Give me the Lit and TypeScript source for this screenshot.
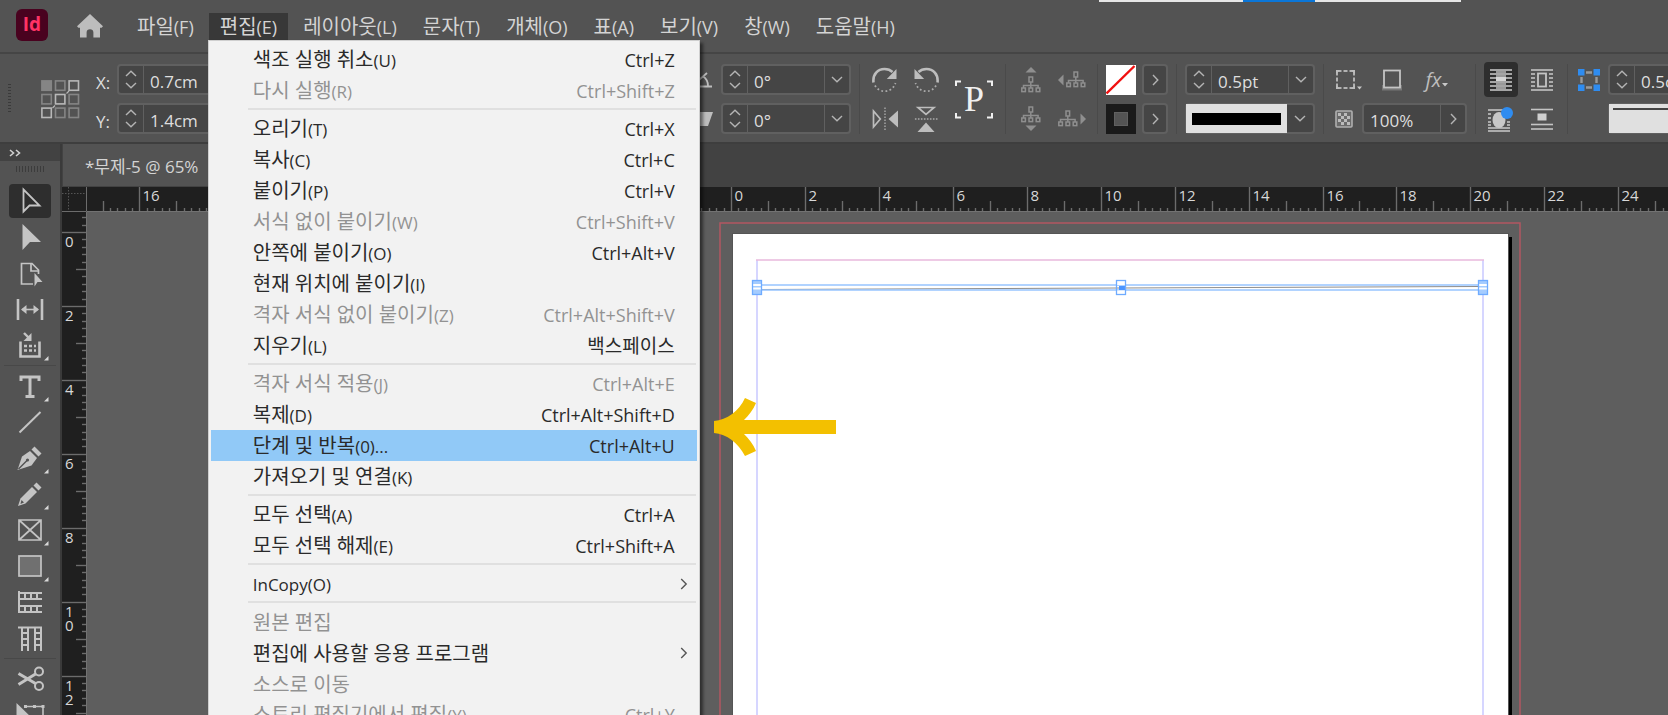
import { LitElement, html, svg, css, nothing } from "lit";
import { customElement, property } from "lit/decorators.js";
import { classMap } from "lit/directives/class-map.js";

const FONT = css`"Open Sans", "Noto Sans CJK KR", sans-serif`;

interface Command {
  label: string;
  key?: string;
  shortcut?: string;
  disabled?: boolean;
  active?: boolean;
  submenu?: boolean;
}

const MENUS: [string, string][] = [
  ["파일", "(F)"],
  ["편집", "(E)"],
  ["레이아웃", "(L)"],
  ["문자", "(T)"],
  ["개체", "(O)"],
  ["표", "(A)"],
  ["보기", "(V)"],
  ["창", "(W)"],
  ["도움말", "(H)"],
];

const EDIT_MENU: Command[][] = [
  [
    { label: "색조 실행 취소", key: "(U)", shortcut: "Ctrl+Z" },
    { label: "다시 실행", key: "(R)", shortcut: "Ctrl+Shift+Z", disabled: true },
  ],
  [
    { label: "오리기", key: "(T)", shortcut: "Ctrl+X" },
    { label: "복사", key: "(C)", shortcut: "Ctrl+C" },
    { label: "붙이기", key: "(P)", shortcut: "Ctrl+V" },
    { label: "서식 없이 붙이기", key: "(W)", shortcut: "Ctrl+Shift+V", disabled: true },
    { label: "안쪽에 붙이기", key: "(O)", shortcut: "Ctrl+Alt+V" },
    { label: "현재 위치에 붙이기", key: "(I)" },
    { label: "격자 서식 없이 붙이기", key: "(Z)", shortcut: "Ctrl+Alt+Shift+V", disabled: true },
    { label: "지우기", key: "(L)", shortcut: "백스페이스" },
  ],
  [
    { label: "격자 서식 적용", key: "(J)", shortcut: "Ctrl+Alt+E", disabled: true },
    { label: "복제", key: "(D)", shortcut: "Ctrl+Alt+Shift+D" },
    { label: "단계 및 반복", key: "(0)...", shortcut: "Ctrl+Alt+U", active: true },
    { label: "가져오기 및 연결", key: "(K)" },
  ],
  [
    { label: "모두 선택", key: "(A)", shortcut: "Ctrl+A" },
    { label: "모두 선택 해제", key: "(E)", shortcut: "Ctrl+Shift+A" },
  ],
  [{ label: "", key: "InCopy(O)", submenu: true }],
  [
    { label: "원본 편집", disabled: true },
    { label: "편집에 사용할 응용 프로그램", submenu: true },
    { label: "소스로 이동", disabled: true },
    { label: "스토리 편집기에서 편집", key: "(Y)", shortcut: "Ctrl+Y", disabled: true },
  ],
];

/* ---------- icons ---------- */

const icon = (w: number, h: number, body: unknown) =>
  html`<svg width=${w} height=${h} viewBox="0 0 ${w} ${h}" aria-hidden="true">${body}</svg>`;

const chevron = {
  up: icon(12, 7, svg`<path d="M1 6L6 1.2L11 6" fill="none" stroke="#b4b4b4" stroke-width="1.4"/>`),
  down: icon(12, 7, svg`<path d="M1 1L6 5.8L11 1" fill="none" stroke="#b4b4b4" stroke-width="1.4"/>`),
  right: icon(7, 12, svg`<path d="M1 1L5.8 6L1 11" fill="none" stroke="#b4b4b4" stroke-width="1.4"/>`),
  submenu: icon(8, 12, svg`<path d="M1.2 1L6.2 6L1.2 11" fill="none" stroke="#555" stroke-width="1.4"/>`),
};

const homeIcon = icon(26, 24, svg`<path fill="#bdbdbd" d="M13 0L26 12.2L24.6 13.8H23V23.5H16.4V18.4C16.4 16.4 15 15.2 13 15.2S9.600 16.400 9.600 18.400V23.500H3V13.800H1.400L0 12.200Z"/>`);

const refPoint = (() => {
  const cells = [];
  for (let r = 0; r < 3; r++)
    for (let c = 0; c < 3; c++) {
      const diag = r + c === 2;
      const on = r === 0 && c === 0;
      cells.push(svg`<rect x=${c * 13.6 + 0.9} y=${r * 13.6 + 0.9} width="9.4" height="9.4"
        fill=${on ? "#858585" : "none"} stroke=${diag ? "#b8b8b8" : "#858585"} stroke-width="1.6"/>`);
    }
  return icon(39, 39, svg`${cells}<path d="M11.500 28L14 25.500M25.500 13.500L28 11" stroke="#b8b8b8" stroke-width="1.200"/>`);
})();

const angleIcon = icon(24, 18, svg`<g fill="none" stroke="#bdbdbd" stroke-width="1.800"><path d="M2 15.500H23M3 15L18 2"/><path d="M14 5.500C17.500 7.500 19 11 19 15"/></g>`);
const shearIcon = icon(24, 16, svg`<path d="M6 1H24L19 15H1Z" fill="#bdbdbd"/>`);

const rotateBody = svg`<path d="M1.500 15.500C.500 7 6 2 12.500 2C16 2 18.500 3 20.500 5" fill="none" stroke="#bdbdbd" stroke-width="2.600"/><path d="M24.500 2V12H14.800Z" fill="#bdbdbd"/><path d="M3 18.500C7 26.500 20 26.500 23.500 16" fill="none" stroke="#aaa" stroke-width="1.800" stroke-dasharray="1.800 2.400"/>`;
const rotateCw = icon(26, 26, rotateBody);
const rotateCcw = icon(26, 26, svg`<g transform="matrix(-1 0 0 1 26 0)">${rotateBody}</g>`);
const flipBody = svg`<path d="M1.500 5V21L8.300 13Z" fill="none" stroke="#bdbdbd" stroke-width="1.700"/><path d="M13 1.500V25" stroke="#aaa" stroke-width="1.400" stroke-dasharray="1.600 1.400"/><path d="M26 4.500V21.500L16.500 13Z" fill="#bdbdbd"/>`;
const flipH = icon(26, 26, flipBody);
const flipV = icon(26, 26, svg`<g transform="rotate(90 13 13)">${flipBody}</g>`);
const paragraphBox = icon(38, 39, svg`<g fill="none" stroke="#f0f0f0" stroke-width="2"><path d="M1 6V1.500H6M32 1.500H37V6M37 33V37.500H32M6 37.500H1V33"/></g>`);

const treeBody = svg`<g fill="none" stroke="#8f8f8f" stroke-width="1.500"><rect x="8" y="1" width="3.600" height="5"/><path d="M9.800 6V12M2.500 12V9.500H17.100V12"/><rect x=".8" y="12" width="3.600" height="3.600"/><rect x="8" y="12" width="3.600" height="3.600"/><rect x="15.200" y="12" width="3.600" height="3.600"/></g>`;
const tree = {
  parentUp: icon(20, 26, svg`<g transform="translate(0 9)">${treeBody}</g><path d="M10 0L15.500 5.500H4.500Z" fill="#8f8f8f"/>`),
  parentDown: icon(20, 26, svg`${treeBody}<path d="M10 25L15.500 19.500H4.500Z" fill="#8f8f8f"/>`),
  prev: icon(28, 18, svg`<g transform="translate(8 0)">${treeBody}</g><path d="M0 9L5.500 3.500V14.500Z" fill="#8f8f8f"/>`),
  next: icon(28, 18, svg`${treeBody}<path d="M28 9L22.500 3.500V14.500Z" fill="#8f8f8f"/>`),
};

const noneSwatch = icon(30, 30, svg`<rect width="30" height="30" fill="#fff"/><path d="M.500 28.500L28.500 1" stroke="#f01010" stroke-width="2.400"/>`);
const strokeSwatch = icon(30, 30, svg`<rect width="30" height="30" fill="#1a1a1a"/><rect x="8.500" y="8.500" width="13" height="13" fill="#535353" stroke="#606060"/>`);

const frameFit = icon(30, 26, svg`<rect x="5" y="4" width="17" height="17" fill="none" stroke="#bdbdbd" stroke-width="1.800"/><g fill="#bdbdbd"><path d="M4 3H8L4 7ZM23 3H19L23 7ZM4 22H8L4 18ZM23 22H19L23 18Z"/></g><g fill="#535353"><rect x="9.500" y="2" width="2" height="3"/><rect x="15.500" y="2" width="2" height="3"/><rect x="9.500" y="20" width="2" height="3"/><rect x="15.500" y="20" width="2" height="3"/><rect x="3" y="8.500" width="3" height="2"/><rect x="3" y="14.500" width="3" height="2"/><rect x="21" y="8.500" width="3" height="2"/><rect x="21" y="14.500" width="3" height="2"/></g><path d="M25 19.500H30L27.500 22.500Z" fill="#c8c8c8"/>`);
const shadowBox = icon(22, 24, svg`<rect x="1" y="17" width="20" height="5.500" fill="#777"/><rect x="3" y="2.500" width="16" height="17" fill="#535353" stroke="#c4c4c4" stroke-width="1.800"/>`);
const checker = icon(18, 18, svg`<rect x="1" y="1" width="16" height="16" rx="1" fill="#6b6b6b" stroke="#b0b0b0" stroke-width="1.600"/><path fill="#bbb" d="M3 3H6V6H3ZM9 3H12V6H9ZM6 6H9V9H6ZM12 6H15V9H12ZM3 9H6V12H3ZM9 9H12V12H9ZM6 12H9V15H6ZM12 12H15V15H12Z"/>`);
const dropTick = icon(6, 4, svg`<path d="M0 0H6L3 3.500Z" fill="#c8c8c8"/>`);

const lines = (ys: number[], x1 = 0, x2 = 22) => ys.map((y) => svg`<path d="M${x1} ${y}H${x2}" stroke="#c4c4c4" stroke-width="1.600"/>`);
const wrapNone = icon(22, 22, svg`${lines([1, 5, 9, 13, 17, 21])}<path d="M6 3H16M6 7H16M6 11H16M6 15H16M6 19H16" stroke="#999" stroke-width="1.800"/><rect x="6" y="8" width="10" height="4" fill="#d4d4d4"/>`);
const wrapBox = icon(22, 22, svg`${lines([1, 21])}${lines([5, 9, 13, 17], 0, 4)}${lines([5, 9, 13, 17], 18, 22)}<rect x="7" y="4.500" width="8" height="13" fill="none" stroke="#c4c4c4" stroke-width="1.800"/>`);
const wrapShape = icon(26, 26, svg`${lines([4, 22, 25])}${lines([8, 12, 16, 19], 0, 3)}${lines([16, 19], 19, 22)}<ellipse cx="11" cy="14" rx="6.500" ry="8" fill="#c8c8c8"/><circle cx="19" cy="7" r="6" fill="#2f8cf0"/>`);
const wrapJump = icon(22, 22, svg`${lines([1.500, 16.500, 21])}<rect x="6.500" y="5.500" width="9" height="7" fill="#d0d0d0"/>`);
const cornerIcon = icon(22, 22, svg`<path d="M8 3.500H14M8 18.500H14M3.500 8V14M18.500 8V14" stroke="#9a9a9a" stroke-width="2.400"/><g fill="#2f8cf0"><rect width="6.500" height="6.500"/><rect x="15.500" width="6.500" height="6.500"/><rect y="15.500" width="6.500" height="6.500"/><rect x="15.500" y="15.500" width="6.500" height="6.500"/></g>`);

/* ---------- tools ---------- */

interface Tool {
  name: string;
  art: unknown;
  flyout?: boolean;
  active?: boolean;
}

const L = "#c4c4c4";
const TOOLS: Tool[][] = [
  [
    { name: "선택 도구", active: true, art: svg`<path d="M14.500 6.500V28.500L20.500 22.500H30.500Z" fill="none" stroke=${L} stroke-width="1.800"/>` },
    { name: "직접 선택 도구", art: svg`<path d="M13.500 5V31L21 23H32Z" fill=${L}/>` },
    { name: "페이지 도구", art: svg`<path d="M24 29H12.500V8.500H23L29.500 15V19" fill="none" stroke=${L} stroke-width="1.700"/><path d="M22 9V16H29" fill="none" stroke=${L} stroke-width="1.700"/><path d="M25.500 18V31.500L28.500 27H33.500Z" fill=${L}/>` },
    { name: "간격 도구", art: svg`<path d="M9 8V29M33 8V29" stroke=${L} stroke-width="2.600"/><path d="M13 18.500H29" stroke=${L} stroke-width="1.600"/><path d="M12 18.500L17.500 14V23ZM30 18.500L24.500 14V23Z" fill=${L}/>` },
    { name: "내용 수집 도구", flyout: true, art: svg`<path d="M15 6L20 11" stroke=${L} stroke-width="2.400"/><path d="M22.500 6V14H14.500Z" fill=${L}/><path d="M11.500 14.500V29.500H30.500V14.500" fill="none" stroke=${L} stroke-width="2.600"/><path d="M15 19H27M15 23.500H27" stroke=${L} stroke-width="2.600" stroke-dasharray="3 2"/>` },
  ],
  [
    { name: "문자 도구", flyout: true, art: svg`<path d="M12 13V9H30V13M21 9V28M16.500 28.500H25.500" fill="none" stroke=${L} stroke-width="3"/>` },
    { name: "선 도구", art: svg`<path d="M10.500 28.500L31.500 8" stroke=${L} stroke-width="2"/>` },
    { name: "펜 도구", flyout: true, art: svg`<path d="M8.500 30L13 16.500L21 11L28 18L22.500 25.500Z" fill=${L}/><path d="M9.500 29L18 20.500" stroke="#535353" stroke-width="1.400"/><circle cx="18.500" cy="20" r="1.600" fill="#535353"/><path d="M22.500 9.500L25.500 6.500L32.500 13.500L29.500 16.500Z" fill=${L}/>` },
    { name: "연필 도구", flyout: true, art: svg`<path d="M9 30L11.500 22.500L23 11L28 16L16.500 27.500Z" fill=${L}/><path d="M12.500 24L15 26.500L11.500 28Z" fill="#535353"/><path d="M24.500 9.500L27.500 6.500L32.500 11.500L29.500 14.500Z" fill=${L}/>` },
    { name: "사각형 프레임 도구", flyout: true, art: svg`<path d="M10 8H32V28H10ZM10 8L32 28M32 8L10 28" fill="none" stroke=${L} stroke-width="1.700"/>` },
    { name: "사각형 도구", flyout: true, art: svg`<rect x="10" y="8" width="22" height="20" fill="#707070" stroke=${L} stroke-width="1.700"/>` },
    { name: "가로 격자 도구", art: svg`<path d="M10 7V29M9 9H33M9 15H33M9 22H33M9 28H33M16 9V15M22 9V15M28 9V15M16 22V28M22 22V28M28 22V28" fill="none" stroke=${L} stroke-width="2"/>` },
    { name: "세로 격자 도구", art: svg`<path d="M9 7.500H33M13 7V31M19 7V31M26 7V31M32 7V31M13 13H19M13 19H19M13 25H19M26 13H32M26 19H32M26 25H32" fill="none" stroke=${L} stroke-width="2"/>` },
  ],
  [
    { name: "가위 도구", art: svg`<g fill="none" stroke=${L} stroke-width="2"><circle cx="30" cy="10.500" r="4"/><circle cx="30" cy="25" r="4"/><path d="M26.500 13L9.500 23.500M26.500 22.500L9.500 12.500" stroke-width="3"/></g>` },
    { name: "자유 변형 도구", art: svg`<path d="M7.500 6V29L14 22H24Z" fill=${L}/><path d="M16 9.500H34V29" fill="none" stroke=${L} stroke-width="1.600"/><rect x="15" y="8" width="3" height="3" fill=${L}/><rect x="24" y="8" width="3" height="3" fill=${L}/><rect x="32.500" y="8" width="3" height="3" fill=${L}/>` },
  ],
];

/* ---------- number field ---------- */

@customElement("value-field")
export class ValueField extends LitElement {
  @property() label = "";
  @property() value = "";
  @property() menu: "down" | "right" | "" = "";
  @property({ type: Boolean }) spin = false;

  static styles = css`
    :host { display: block; height: 31px; min-width: 0; }
    .field { box-sizing: border-box; display: flex; height: 31px; background: #454545; border: 2px solid #606060; border-radius: 4px; }
    button { appearance: none; margin: 0; padding: 0; border: 0; background: none; display: flex; align-items: center; justify-content: center; }
    .spin { flex: 0 0 24px; display: flex; flex-direction: column; justify-content: space-evenly; border-right: 1px solid #606060; }
    .menu { flex: 0 0 25px; border-left: 1px solid #606060; }
    input { flex: 1 1 0; width: 0; min-width: 0; margin: 0; border: 0; padding: 4px 0 0 6px; background: none; color: #dedede; outline: none; font: 17px ${FONT}; }
  `;

  render() {
    return html`<div class="field">
      ${this.spin
        ? html`<div class="spin">
            <button aria-label="${this.label} 증가">${chevron.up}</button>
            <button aria-label="${this.label} 감소">${chevron.down}</button>
          </div>`
        : nothing}
      <input aria-label=${this.label} .value=${this.value} />
      ${this.menu ? html`<button class="menu" aria-label="${this.label} 목록">${chevron[this.menu]}</button>` : nothing}
    </div>`;
  }
}

/* ---------- control bar ---------- */

@customElement("control-bar")
export class ControlBar extends LitElement {
  static styles = css`
    :host { display: flex; gap: 8px; padding: 10px 0 8px 8px; background: #535353; border-top: 2px solid #454545; border-bottom: 2px solid #3e3e3e; overflow: hidden; font: 17px ${FONT}; color: #dedede; }
    button { appearance: none; margin: 0; padding: 0; border: 0; background: none; color: inherit; font: inherit; display: flex; align-items: center; justify-content: center; }
    .grip { flex: 0 0 3px; height: 30px; align-self: center; background: repeating-linear-gradient(#3a3a3a 0 1px, #535353 1px 3px); }
    .ref { flex: 0 0 39px; margin: 0 8px 0 22px; align-self: center; }
    .ref svg { display: block; }
    .group { flex: none; display: grid; grid-template-rows: 31px 31px; gap: 8px; align-items: center; }
    .xy { grid-template-columns: 14px 130px; column-gap: 7px; }
    .xy label { padding-top: 6px; white-space: nowrap; }
    .covered { flex: 0 0 426px; }
    .angle { grid-template-columns: 24px 130px; }
    .pair { grid-template-columns: 34px 34px; column-gap: 7px; justify-items: stretch; }
    .group button { height: 31px; }
    .pair .on { height: 35px; background: #2e2e2e; border-radius: 4px; }
    .rule { flex: 0 0 1px; background: #4a4a4a; }
    .para { flex: 0 0 38px; height: 39px; margin: 0 4px; align-self: center; position: relative; font: 36px "Liberation Serif", serif; color: #f0f0f0; }
    .para svg { position: absolute; inset: 0; }
    .colors { grid-template-columns: 30px 26px; column-gap: 6px; }
    .box { box-sizing: border-box; background: #454545; border: 2px solid #606060; border-radius: 4px; }
    .stroke { grid-template-columns: 130px; }
    .style { box-sizing: border-box; display: flex; width: 100%; border: 2px solid #606060; border-radius: 4px; background: #454545; }
    .group .style { justify-content: flex-start; }
    .sample { flex: 1; align-self: stretch; margin: -1px 0 -1px -1px; background: #e0e0e0; display: flex; align-items: center; padding: 0 6px; }
    .sample i { flex: 1; height: 12px; background: #000; }
    .sample.thin { align-items: flex-start; padding: 4px 0 0 4px; }
    .sample.thin i { height: 2px; background: #444; }
    .arrow { flex: 0 0 26px; display: flex; justify-content: center; }
    .effects { grid-template-columns: 135px; }
    .row { display: flex; gap: 15px; }
    .row button { width: 30px; flex: none; }
    .row.tight { gap: 0; }
    .row.tight button { padding-right: 6px; box-sizing: border-box; }
    .row.tight value-field { flex: 1; }
    .fx { font: italic 20px ${FONT}; gap: 1px; color: #bdbdbd; }
    .fx svg { align-self: flex-end; margin-bottom: 8px; flex: none; }
    .corner { grid-template-columns: 26px 130px; column-gap: 6px; }
  `;

  render() {
    return html`
      <div class="grip"></div>
      <div class="ref">${refPoint}</div>
      <div class="group xy">
        <label>X:</label><value-field label="X" value="0.7cm" spin></value-field>
        <label>Y:</label><value-field label="Y" value="1.4cm" spin></value-field>
      </div>
      <div class="covered"></div>
      <div class="group angle">
        ${angleIcon}<value-field label="회전 각도" value="0°" spin menu="down"></value-field>
        ${shearIcon}<value-field label="기울이기 각도" value="0°" spin menu="down"></value-field>
      </div>
      <div class="rule"></div>
      <div class="group pair">
        <button aria-label="시계 방향 회전">${rotateCw}</button>
        <button aria-label="시계 반대 방향 회전">${rotateCcw}</button>
        <button aria-label="가로로 뒤집기">${flipH}</button>
        <button aria-label="세로로 뒤집기">${flipV}</button>
      </div>
      <button class="para" aria-label="변형 표시">${paragraphBox}P</button>
      <div class="rule"></div>
      <div class="group pair">
        <button aria-label="컨테이너 선택">${tree.parentUp}</button>
        <button aria-label="이전 개체 선택">${tree.prev}</button>
        <button aria-label="내용 선택">${tree.parentDown}</button>
        <button aria-label="다음 개체 선택">${tree.next}</button>
      </div>
      <div class="rule"></div>
      <div class="group colors">
        <button aria-label="칠">${noneSwatch}</button><button class="box" aria-label="칠 색상">${chevron.right}</button>
        <button aria-label="획">${strokeSwatch}</button><button class="box" aria-label="획 색상">${chevron.right}</button>
      </div>
      <div class="rule"></div>
      <div class="group stroke">
        <value-field label="획 두께" value="0.5pt" spin menu="down"></value-field>
        <button class="style" aria-label="획 유형"><span class="sample"><i></i></span><span class="arrow">${chevron.down}</span></button>
      </div>
      <div class="rule"></div>
      <div class="group effects">
        <div class="row">
          <button aria-label="맞춤">${frameFit}</button>
          <button aria-label="그림자">${shadowBox}</button>
          <button class="fx" aria-label="효과">fx${dropTick}</button>
        </div>
        <div class="row tight">
          <button aria-label="불투명도">${checker}</button>
          <value-field label="불투명도" value="100%" menu="right"></value-field>
        </div>
      </div>
      <div class="rule"></div>
      <div class="group pair">
        <button class="on" aria-label="감싸기 없음">${wrapNone}</button>
        <button aria-label="테두리 상자 감싸기">${wrapBox}</button>
        <button aria-label="개체 모양 감싸기">${wrapShape}</button>
        <button aria-label="개체 건너뛰기">${wrapJump}</button>
      </div>
      <div class="rule"></div>
      <div class="group corner">
        <button aria-label="모퉁이 옵션">${cornerIcon}</button>
        <value-field label="모퉁이 크기" value="0.5cm" spin></value-field>
        <span></span>
        <button class="style" aria-label="모퉁이 모양"><span class="sample thin"><i></i></span></button>
      </div>
    `;
  }
}

/* ---------- menu bar ---------- */

@customElement("menu-bar")
export class MenuBar extends LitElement {
  static styles = css`
    :host { display: flex; align-items: center; height: 52px; padding-left: 16px; background: #535353; color: #d4d4d4; position: relative; z-index: 2; font: 20px/27px ${FONT}; }
    button { appearance: none; margin: 0; border: 0; background: none; color: inherit; font: inherit; white-space: nowrap; }
    .logo { width: 32px; height: 32px; margin-bottom: 2px; border-radius: 6px; background: #49021f; color: #ff3366; font: bold 19px/30px ${FONT}; text-align: center; }
    .home { padding: 0; margin-left: 29px; display: flex; }
    nav { display: flex; gap: 4px; margin-left: 23px; }
    .item { position: relative; }
    .title { padding: 0 11px; height: 27px; display: block; }
    .key { font-size: 18px; }
    .open { background: #383838; }
    .menu { position: absolute; top: 100%; left: -1px; width: 492px; box-sizing: border-box; margin: 0; padding: 3px 2px; list-style: none; background: #f2f2f2; border: 1px solid #cfcfcf; box-shadow: 3px 3px 3px rgba(0, 0, 0, 0.5); color: #2a2a2a; }
    .cmd { width: 100%; height: 31px; padding: 2px 22px 0 42px; display: flex; align-items: center; justify-content: space-between; box-sizing: border-box; }
    .menu .key { font-size: 17px; }
    .cmd:disabled { color: #929292; }
    .cmd.active { background: #91c9f7; }
    .keys { font-size: 18px; }
    .keys.word { font-size: 19px; }
    .cmd.sub { padding-right: 9px; }
    .sep { height: 2px; margin: 2px 1px 3px 37px; background: #e0e0e0; }
    .window { position: absolute; top: 0; left: 1099px; width: 362px; height: 2px; background: linear-gradient(90deg, #e6e6e6 144px, #0a76d8 144px 216px, #e6e6e6 216px); }
  `;

  private command(c: Command) {
    return html`<li>
      <button class=${classMap({ cmd: true, active: !!c.active, sub: !!c.submenu })} ?disabled=${c.disabled}>
        <span>${c.label}${c.key ? html`<span class="key">${c.key}</span>` : nothing}</span>
        ${c.submenu ? chevron.submenu : nothing}
        ${c.shortcut
          ? html`<span class=${classMap({ keys: true, word: !c.shortcut.includes("+") })}>${c.shortcut}</span>`
          : nothing}
      </button>
    </li>`;
  }

  render() {
    return html`
      <div class="window"></div>
      <div class="logo">Id</div>
      <button class="home" aria-label="홈">${homeIcon}</button>
      <nav>
        ${MENUS.map(([name, key], i) => html`<div class="item">
          <button class=${classMap({ title: true, open: i === 1 })}>${name}<span class="key">${key}</span></button>
          ${i === 1
            ? html`<ul class="menu">
                ${EDIT_MENU.map((group, g) => html`${g ? html`<li class="sep" role="separator"></li>` : nothing}${group.map((c) => this.command(c))}`)}
              </ul>`
            : nothing}
        </div>`)}
      </nav>
    `;
  }
}

/* ---------- tool bar ---------- */

@customElement("tool-bar")
export class ToolBar extends LitElement {
  static styles = css`
    :host { display: flex; flex-direction: column; align-items: center; background: #535353; border-right: 2px solid #3a3a3a; overflow: hidden; }
    button { appearance: none; margin: 1px 0; padding: 0; border: 0; border-radius: 4px; background: none; display: block; width: 42px; height: 34px; flex: none; }
    .on { background: #2e2e2e; }
    .head { align-self: stretch; height: 17px; flex: none; display: flex; align-items: center; padding-left: 9px; background: #424242; }
    .grip { width: 29px; height: 6px; margin: 5px 0 11px; flex: none; background: repeating-linear-gradient(90deg, #3c3c3c 0 1px, #535353 1px 3px); }
    .sep { align-self: stretch; height: 1px; margin: 2px 4px; flex: none; background: #484848; }
    svg { display: block; }
  `;

  render() {
    return html`
      <div class="head">${icon(12, 8, svg`<path d="M1 1L4.500 4L1 7M7 1L10.500 4L7 7" fill="none" stroke="#d0d0d0" stroke-width="1.600"/>`)}</div>
      <div class="grip"></div>
      ${TOOLS.map((group, g) => html`
        ${g ? html`<div class="sep"></div>` : nothing}
        ${group.map((t) => html`<button class=${classMap({ on: !!t.active })} aria-label=${t.name}>
          <svg width="42" height="34" viewBox="0 1 42 34">
            ${t.art}${t.flyout ? svg`<path d="M39.500 29V33.500H35Z" fill="#d8d8d8"/>` : nothing}
          </svg>
        </button>`)}
      `)}
    `;
  }
}

/* ---------- document area ---------- */

const UNIT = 36.97;

@customElement("document-view")
export class DocumentView extends LitElement {
  static styles = css`
    :host { display: grid; grid-template-rows: 43px 25px minmax(0, 1fr); grid-template-columns: 25px minmax(0, 1fr); background: #1f1f1f; min-width: 0; min-height: 0; overflow: hidden; }
    .tabs { grid-column: 1 / -1; display: flex; background: #424242; }
    .tab { appearance: none; margin: 0 0 1px 1px; padding: 0 22px; border: 0; background: #535353; color: #d4d4d4; font: 17px ${FONT}; white-space: nowrap; }
    svg { display: block; width: 100%; height: 100%; }
    text { fill: #d8d8d8; font: 15px ${FONT}; }
    .spread { background: #5e5e5e; }
  `;

  private onResize = () => this.requestUpdate();

  connectedCallback() {
    super.connectedCallback();
    window.addEventListener("resize", this.onResize);
  }

  disconnectedCallback() {
    window.removeEventListener("resize", this.onResize);
    super.disconnectedCallback();
  }

  /** Ticks from the given unit up to the visible length of the ruler. */
  private ruler(vertical: boolean, zero: number, from: number, length: number) {
    const out = [];
    const to = Math.floor((length - zero) / UNIT);
    for (let u = from; u <= to; u++) {
      const major = u % 2 === 0;
      const p = Math.round(zero + u * UNIT) + 0.5;
      const depth = major ? 0 : 14;
      out.push(svg`<path d=${vertical ? `M${depth} ${p}H24` : `M${p} ${depth}V24`} stroke="#6c6c6c" stroke-width="1.400"/>`);
      for (let s = 1; s < 5; s++) {
        const q = Math.round(zero + (u + s / 5) * UNIT) + 0.5;
        out.push(svg`<path d=${vertical ? `M20 ${q}H24` : `M${q} 21V24`} stroke="#6c6c6c" stroke-width="1.400"/>`);
      }
      if (major) {
        const n = String(Math.abs(u));
        out.push(
          vertical
            ? [...n].map((d, i) => svg`<text x="3" y=${p + 14 + i * 14}>${d}</text>`)
            : svg`<text x=${p + 3} y="14">${n}</text>`
        );
      }
    }
    return out;
  }

  private handle(x: number, y: number, kind: "end" | "mid") {
    return svg`<g transform="translate(${x} ${y})">
      ${kind === "end"
        ? svg`<rect x="-5" y="-8" width="10" height="15" fill="#a5ccff"/><path d="M-4 -3H4M-4 .500H4" stroke="#fff" stroke-width="1.800"/>`
        : svg`<path d="M-4 -6.500H4V-3H-4ZM-4 2.500H4V6H-4Z" fill="#fff"/><rect x="-2" y="-2" width="6" height="4" fill="#4a94ff"/>`}
      <rect x="-4.500" y="-7.500" width="9" height="14" fill="none" stroke="#6fabff" stroke-width="1.300"/>
    </g>`;
  }

  render() {
    return html`
      <div class="tabs"><button class="tab">*무제-5 @ 65%</button></div>
      <svg><path d="M0 6.500H24M6.500 0V24" stroke="#555" stroke-dasharray="1.500 1.500"/><path d="M24.500 0V24.500H0" fill="none" stroke="#6c6c6c"/></svg>
      <svg>${this.ruler(false, 644, -17, window.innerWidth - 87)}<path d="M0 24.500H4000" stroke="#727272"/></svg>
      <svg>${this.ruler(true, 20, -1, window.innerHeight - 213)}<path d="M24.500 0V3000" stroke="#727272"/></svg>
      <svg class="spread">
        <rect x="633" y="11" width="800" height="2000" fill="none" stroke="#b25762" stroke-width="1.500"/>
        <rect x="1420" y="25" width="5" height="2000" fill="#000"/>
        <rect x="645.500" y="21.500" width="776" height="2000" fill="#fff" stroke="#555"/>
        <path d="M670 48V2000M1396 48V2000" stroke="#ccccff" stroke-width="1.600"/>
        <path d="M669 48H1397" stroke="#e8b9dc" stroke-width="1.600"/>
        <path d="M675 77.500L1391 74.500" stroke="#8c8c8c"/>
        <path d="M670 73H1396M670 78H1396" stroke="#98c5ff" stroke-width="1.600"/>
        ${this.handle(670, 76, "end")}${this.handle(1034, 76, "mid")}${this.handle(1396, 76, "end")}
        <path d="M627 209C640 208 652 199 658 186L669 191C666 198 662 203 657 208H749V222H657C662 227 666 232 669 239L658 244C651 231 640 222 627 221Z" fill="#f3c000"/>
      </svg>
    `;
  }
}

/* ---------- application ---------- */

@customElement("app-root")
export class AppRoot extends LitElement {
  static styles = css`
    :host { display: flex; flex-direction: column; height: 100vh; overflow: hidden; background: #535353; }
    menu-bar, control-bar { flex: none; }
    .work { flex: 1; min-height: 0; display: grid; grid-template-columns: 62px minmax(0, 1fr); grid-template-rows: minmax(0, 1fr); }
  `;

  render() {
    return html`
      <menu-bar></menu-bar>
      <control-bar></control-bar>
      <div class="work">
        <tool-bar></tool-bar>
        <document-view></document-view>
      </div>
    `;
  }
}
